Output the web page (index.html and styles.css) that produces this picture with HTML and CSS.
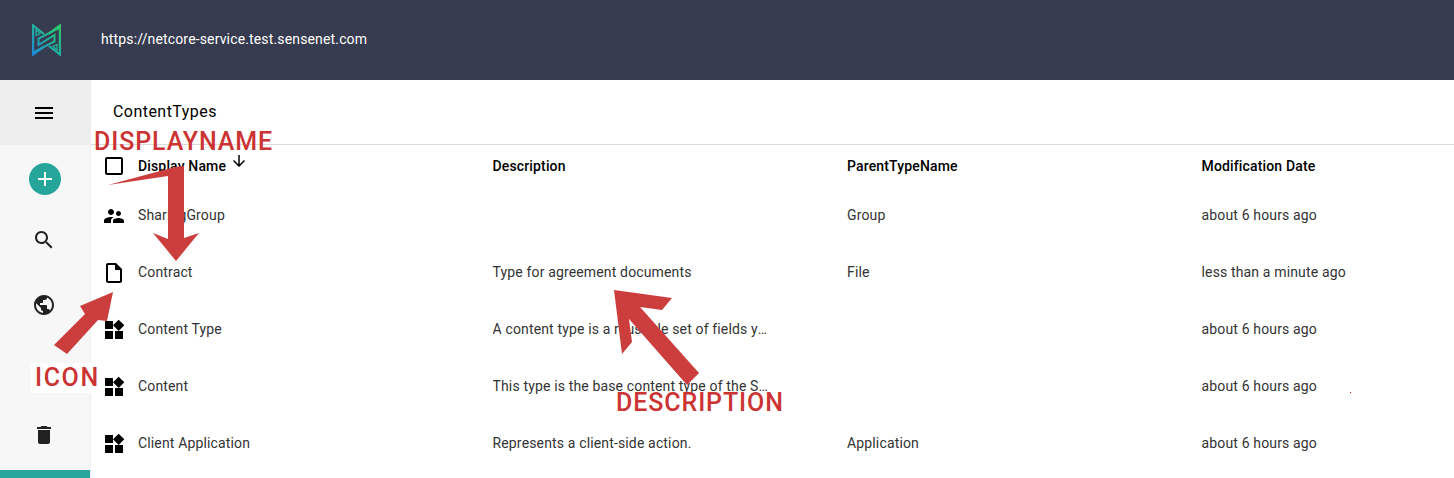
FILE: index.html
```html
<!DOCTYPE html>
<html lang="en">
<head>
<meta charset="utf-8">
<title>ContentTypes</title>
<link rel="stylesheet" href="styles.css">
</head>
<body>
<header class="topbar">
  <div class="logo-cell">
    <svg class="logo" viewBox="0 0 29 32" width="29" height="32">
      <defs><linearGradient id="lg" gradientUnits="userSpaceOnUse" x1="0" y1="30" x2="29" y2="4"><stop offset="0" stop-color="#1e88d8"/><stop offset=".5" stop-color="#1fb0a0"/><stop offset="1" stop-color="#2fc86a"/></linearGradient></defs>
      <path fill="none" stroke="url(#lg)" stroke-width="2.200" d="M12 10L1.100 1.500V30.500L12 22.500M17 22L27.900 30.500V1.500L17 9.500"/>
      <path fill="none" stroke="url(#lg)" stroke-width="2" d="M27 4L6.500 14.500V21L22.500 11V17.500L2 28"/>
      <path fill="none" stroke="url(#lg)" stroke-width="1.300" d="M4 6L8 9.500L4 11.500ZM25 26L21 22.500L25 20.500Z"/>
    </svg>
  </div>
  <span class="url">https://netcore-service.test.sensenet.com</span>
</header>
<div class="body-row">
  <nav class="sidebar">
    <div class="menu-cell"><svg class="icon" viewBox="0 0 24 24"><path d="M3 18h18v-2H3v2zm0-5h18v-2H3v2zm0-7v2h18V6H3z"/></svg></div>
    <div class="nav-items">
      <div class="nav-item nav-add"><span class="add-circle"><svg class="icon icon-white" viewBox="0 0 24 24"><path d="M19 13h-6v6h-2v-6H5v-2h6V5h2v6h6v2z"/></svg></span></div>
      <div class="nav-item"><svg class="icon icon-dark" viewBox="0 0 24 24"><path d="M15.5 14h-.79l-.28-.27C15.41 12.59 16 11.11 16 9.5 16 5.91 13.09 3 9.5 3S3 5.91 3 9.5 5.91 16 9.5 16c1.61 0 3.09-.59 4.23-1.57l.27.28v.79l5 4.99L20.49 19l-4.99-5zm-6 0C7.01 14 5 11.99 5 9.5S7.01 5 9.5 5 14 7.01 14 9.5 11.99 14 9.5 14z"/></svg></div>
      <div class="nav-item"><svg class="icon icon-dark" viewBox="0 0 24 24"><path d="M12 2C6.48 2 2 6.48 2 12s4.48 10 10 10 10-4.48 10-10S17.52 2 12 2zm-1 17.93c-3.95-.49-7-3.85-7-7.93 0-.62.08-1.21.21-1.79L9 15v1c0 1.1.9 2 2 2v1.93zm6.9-2.54c-.26-.81-1-1.39-1.9-1.39h-1v-3c0-.55-.45-1-1-1H8v-2h2c.55 0 1-.45 1-1V7h2c1.1 0 2-.9 2-2v-.41c2.93 1.19 5 4.06 5 7.41 0 2.08-.8 3.97-2.1 5.39z"/></svg></div>
      <div class="nav-item nav-gap"><svg class="icon icon-dark" viewBox="0 0 24 24"><path d="M6 19c0 1.1.9 2 2 2h8c1.1 0 2-.9 2-2V7H6v12zM19 4h-3.5l-1-1h-5l-1 1H5v2h14V4z"/></svg></div>
    </div>
    <div class="teal-bar"></div>
  </nav>
  <main class="main">
    <h1 class="title">ContentTypes</h1>
    <div class="grid head">
      <div class="cell-icon"><svg class="icon" viewBox="0 0 24 24"><path d="M19 5v14H5V5h14m0-2H5c-1.1 0-2 .9-2 2v14c0 1.1.9 2 2 2h14c1.1 0 2-.9 2-2V5c0-1.1-.9-2-2-2z"/></svg></div>
      <div class="sort-cell">Display Name<svg class="sort" viewBox="0 0 24 24"><path d="M20 12l-1.41-1.41L13 16.17V4h-2v12.17l-5.58-5.59L4 12l8 8 8-8z"/></svg></div>
      <div>Description</div>
      <div>ParentTypeName</div>
      <div>Modification Date</div>
    </div>
    <div class="grid row">
      <div class="cell-icon"><svg class="icon" viewBox="0 0 24 24"><path d="M16.5 12c1.38 0 2.49-1.12 2.49-2.5S17.88 7 16.5 7C15.12 7 14 8.12 14 9.500s1.120 2.500 2.500 2.500zM9 11c1.660 0 2.990-1.340 2.990-3S10.660 5 9 5C7.340 5 6 6.340 6 8s1.340 3 3 3zm7.500 3c-1.830 0-5.500.92-5.500 2.750V19h11v-2.250c0-1.830-3.670-2.750-5.500-2.750zM9 13c-2.330 0-7 1.170-7 3.500V19h7v-2.250c0-.85.33-2.340 2.370-3.470C10.500 13.100 9.660 13 9 13z"/></svg></div>
      <div class="txt">SharingGroup</div><div class="txt"></div><div class="txt">Group</div><div class="txt">about 6 hours ago</div>
    </div>
    <div class="grid row">
      <div class="cell-icon"><svg class="icon" viewBox="0 0 24 24"><path d="M14 2H6c-1.1 0-1.99.9-1.99 2L4 20c0 1.1.89 2 1.99 2H18c1.1 0 2-.9 2-2V8l-6-6zM6 20V4h7v5h5v11H6z"/></svg></div>
      <div class="txt">Contract</div><div class="txt">Type for agreement documents</div><div class="txt">File</div><div class="txt">less than a minute ago</div>
    </div>
    <div class="grid row">
      <div class="cell-icon"><svg class="icon" viewBox="0 0 24 24"><path d="M13 13v8h8v-8h-8zM3 21h8v-8H3v8zM3 3v8h8V3H3zm13.66-1.31L11 7.34 16.66 13l5.66-5.66-5.66-5.65z"/></svg></div>
      <div class="txt">Content Type</div><div class="txt clip">A content type is a reusable set of fields you can apply to content</div><div class="txt"></div><div class="txt">about 6 hours ago</div>
    </div>
    <div class="grid row">
      <div class="cell-icon"><svg class="icon" viewBox="0 0 24 24"><path d="M13 13v8h8v-8h-8zM3 21h8v-8H3v8zM3 3v8h8V3H3zm13.66-1.31L11 7.34 16.66 13l5.66-5.66-5.66-5.65z"/></svg></div>
      <div class="txt">Content</div><div class="txt clip">This type is the base content type of the Sensenet repository</div><div class="txt"></div><div class="txt">about 6 hours ago</div>
    </div>
    <div class="grid row">
      <div class="cell-icon"><svg class="icon" viewBox="0 0 24 24"><path d="M13 13v8h8v-8h-8zM3 21h8v-8H3v8zM3 3v8h8V3H3zm13.66-1.31L11 7.34 16.66 13l5.66-5.66-5.66-5.65z"/></svg></div>
      <div class="txt">Client Application</div><div class="txt">Represents a client-side action.</div><div class="txt">Application</div><div class="txt">about 6 hours ago</div>
    </div>
  </main>
</div>
<svg class="arrows" viewBox="0 0 1454 478" width="1454" height="478">
  <polygon class="arrow" points="108,185 175,167 184,166 184,238 199,233 176,261 153,233 168,239 168,176"/>
  <polygon class="arrow" points="113,292 107,321 98,320 67,354 54,345 85,314 80,306"/>
  <polygon class="arrow" points="614,290 672,298 662,310 640,307 699,373 687,385 629,319 632,342 622,354"/>
  <rect class="dot" x="1350" y="392" width="1" height="1"/>
</svg>
<span class="label label-name">DISPLAYNAME</span>
<span class="label label-icon">ICON</span>
<span class="label label-desc">DESCRIPTION</span>
</body>
</html>
```
FILE: styles.css
```css
* { box-sizing: border-box; }
html, body { margin: 0; height: 478px; overflow: hidden; }
body { font-family: Roboto, "Liberation Sans", sans-serif; background: #fff; position: relative; letter-spacing: .15px; }
.topbar { height: 80px; background: #363b4f; display: flex; align-items: center; }
.logo-cell { width: 90px; display: flex; justify-content: center; }
.logo { display: block; margin-left: 3px; }
.url { margin-left: 11px; padding-bottom: 2px; color: #fff; font-size: 14px; }
.body-row { display: flex; height: 398px; }
.sidebar { width: 91px; flex: none; background: #f7f7f7; border-right: 1px solid #eeeeee; display: flex; flex-direction: column; }
.menu-cell { height: 65px; background: #ededed; display: flex; align-items: center; justify-content: center; flex: none; padding-right: 2px; }
.nav-items { flex: 1; display: flex; flex-direction: column; gap: 15px; padding-top: 11px; }
.nav-item { height: 50px; display: flex; align-items: center; justify-content: center; padding-right: 3px; flex: none; }
.nav-add { height: 46px; margin-bottom: -2px; padding-right: 1px; }
.nav-gap { margin-top: 65px; }
.add-circle { width: 32px; height: 32px; border-radius: 50%; background: #26a69a; display: flex; align-items: center; justify-content: center; }
.teal-bar { height: 8px; width: 90px; background: #26a69a; flex: none; }
.icon { width: 24px; height: 24px; display: block; fill: #000; }
.icon-white { fill: #fff; }
.icon-dark { fill: #212121; }
.main { flex: 1; min-width: 0; overflow: hidden; }
.title { margin: 0; height: 65px; padding: 22px 0 0 22px; font-size: 16px; line-height: 19px; font-weight: 400; letter-spacing: .45px; color: #000; border-bottom: 1px solid #dcdcdc; }
.grid { display: grid; grid-template-columns: 47px 354.5px 354.5px 354.5px 1fr; align-items: center; font-size: 14px; }
.head { height: 42px; font-weight: 500; color: #000; }
.row { height: 57px; color: #333; }
.txt { padding-bottom: 2px; }
.cell-icon { display: flex; padding-left: 11px; }
.sort-cell { display: flex; align-items: flex-start; }
.sort { width: 18px; height: 18px; margin-left: 4px; margin-top: -6px; fill: #000; }
.clip { white-space: nowrap; overflow: hidden; text-overflow: ellipsis; padding-right: 76px; }
.arrows { position: absolute; left: 0; top: 0; pointer-events: none; }
.arrow { fill: #cc3e3e; }
.dot { fill: #f00; }
.label { position: absolute; font-size: 25px; line-height: 30px; font-weight: 500; color: #cc3333; white-space: nowrap; letter-spacing: .9px; }
.label-name { left: 94px; top: 127px; }
.label-icon { left: 31px; top: 363px; padding: 0 0 0 4px; background: #fff; letter-spacing: 1.6px; }
.label-desc { left: 616px; top: 388px; }
```
